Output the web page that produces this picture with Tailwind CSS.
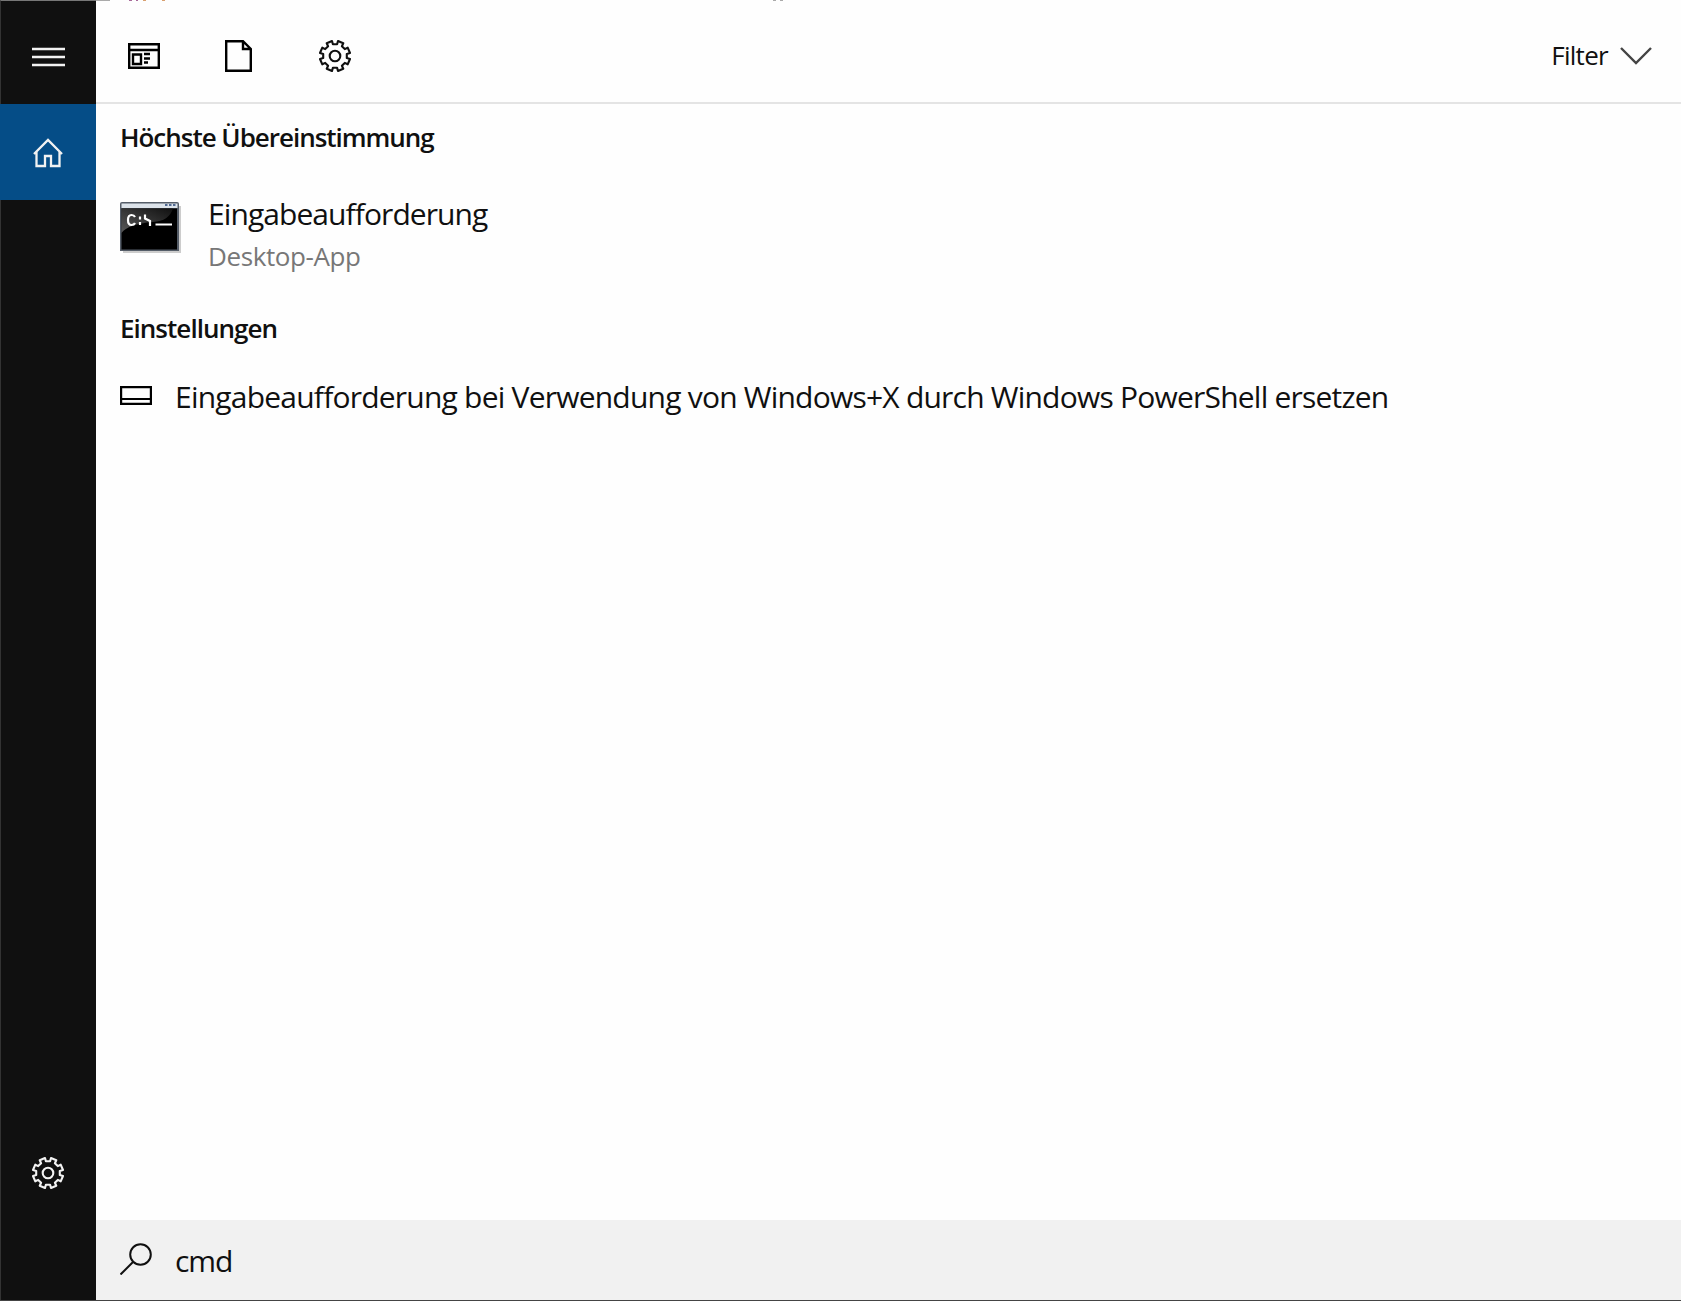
<!DOCTYPE html>
<html lang="de">
<head>
    <meta charset="UTF-8">
    <meta name="viewport" content="width=device-width, initial-scale=1.0">
    <title>Suche - cmd</title>
    <script src="https://cdn.jsdelivr.net/npm/@tailwindcss/browser@4"></script>
</head>
<body class="bg-[#fefefe] font-['Open_Sans','Noto_Sans',sans-serif] text-[#101010] overflow-hidden">
    <svg class="hidden">
        <symbol id="gear" viewBox="-17 -17 34 34">
            <path d="M-2.1-11.8L-3-15L-8.3-12.7L-6.9-9.8L-9.8-6.9L-12.7-8.3L-15-3L-11.8-2.1V2.1L-15 3L-12.7 8.3L-9.8 6.9L-6.9 9.8L-8.3 12.7L-3 15L-2.1 11.8H2.1L3 15L8.3 12.7L6.9 9.8L9.8 6.9L12.7 8.3L15 3L11.8 2.1V-2.1L15-3L12.7-8.3L9.8-6.9L6.9-9.8L8.3-12.7L3-15L2.1-11.8Z" fill="none" stroke="currentColor" stroke-width="2.1" stroke-linejoin="round"/>
            <circle r="5.3" fill="none" stroke="currentColor" stroke-width="2.1"/>
        </symbol>
    </svg>

    <div class="relative flex h-[1301px] w-[1681px] border-b border-[#444]">
        <!-- Sidebar -->
        <nav class="flex w-24 shrink-0 flex-col border-t border-l border-t-[#777] border-l-[#333] bg-[#101010] text-[#f2f2f2]">
            <button class="flex h-[103px] items-center justify-center pt-[9px] pr-px">
                <svg class="h-5 w-[33px]" viewBox="0 0 33 20" stroke="currentColor" stroke-width="2.4"><path d="M0 2h33M0 10h33M0 18h33"/></svg>
            </button>
            <button class="-ml-px flex h-24 items-center justify-center bg-[#054d87] pt-0.5">
                <svg class="h-8 w-8" viewBox="0 0 32 32" fill="none" stroke="currentColor" stroke-width="2.3"><path d="M2 17L16 3L30 17M4.500 15V29H13V19H19V29H27.500V15"/></svg>
            </button>
            <button class="mt-auto mb-[110px] flex justify-center pr-px">
                <svg class="h-[34px] w-[34px]"><use href="#gear"/></svg>
            </button>
        </nav>

        <main class="flex flex-1 flex-col">
            <header class="flex h-[104px] items-center border-b-2 border-[#e4e4e4] pt-2.5 pr-[29px] pl-8">
                <svg class="h-[26px] w-8" viewBox="0 0 32 26" fill="none" stroke="#000" stroke-width="2.4"><path d="M1.200 1.200H30.800V24.800H1.200ZM1 7H31M5 11.500H13V21H5ZM16 11h6M16 15.500h6M16 19.500h4"/></svg>
                <svg class="ml-[65px] h-8 w-[27px]" viewBox="0 0 27 32" fill="none" stroke="#000" stroke-width="2.4"><path d="M1.200 1.200H18L25.800 9V30.800H1.200ZM18 1V9H26"/></svg>
                <svg class="ml-[66px] h-[34px] w-[34px]"><use href="#gear"/></svg>
                <span class="-mt-0.5 ml-auto text-[26px] tracking-[-0.7px]">Filter</span>
                <svg class="ml-3 h-[18px] w-8" viewBox="0 0 32 18" fill="none" stroke="#444" stroke-width="2.4"><path d="M1 1L16 16L31 1"/></svg>
            </header>

            <section class="flex-1 px-6">
                <h2 class="mt-[15px] text-[26px] leading-9 font-semibold tracking-[-1.02px]"><span>Höchste Übereinstimmung</span></h2>
                <div class="mt-[42px] flex">
                    <svg class="mt-[5px] h-[54px] w-[64px]" viewBox="0 0 64 54">
                        <defs>
                            <linearGradient id="gloss" x1="0" y1="1" x2="1" y2="0"><stop offset="0" stop-color="#777"/><stop offset="1" stop-color="#151515"/></linearGradient>
                        </defs>
                        <path d="M3 4H61V51H3Z" fill="#ccc"/>
                        <path d="M0 2Q0 0 2 0H57Q59 0 59 2V49H0Z" fill="#555d68"/>
                        <path d="M1.500 1.500H57.500V6H1.500Z" fill="#dce3ea"/>
                        <path d="M45 3h2.500M49 3h2.500M53 3h2.500" stroke="#526a92" stroke-width="2"/>
                        <path d="M1.500 6.500H57V47.500H1.500Z" fill="#000"/>
                        <path d="M1.500 6.500H53Q49 19 33 20Q8 22 1.500 31Z" fill="url(#gloss)" opacity=".75"/>
                        <path d="M15 15Q14 13 11.500 13Q8 13 8 18Q8 23 11.500 23Q14 23 15 21M20 14.500v3M20 20v3M25 12.500v4L30 19v5M35.500 22.500H52" fill="none" stroke="#fff" stroke-width="2.200"/>
                    </svg>
                    <div class="ml-6">
                        <div class="-mt-[3px] text-[30px] leading-10 tracking-[-0.92px]"><span>Eingabeaufforderung</span></div>
                        <div class="mt-1 text-[26px] leading-9 tracking-[-0.4px] text-[#777]"><span>Desktop-App</span></div>
                    </div>
                </div>
                <h2 class="mt-9 text-[26px] leading-9 font-semibold tracking-[-0.97px]"><span>Einstellungen</span></h2>
                <div class="mt-[31px] flex items-center">
                    <svg class="-mt-1 h-[19px] w-8" viewBox="0 0 32 19" fill="none" stroke="#000" stroke-width="2.2"><path d="M1.100 1.100H30.900V17.900H1.100ZM1 13H31"/></svg>
                    <span class="ml-[23px] text-[30px] leading-10 tracking-[-0.78px] whitespace-nowrap">Eingabeaufforderung bei Verwendung von Windows+X durch Windows PowerShell ersetzen</span>
                </div>
            </section>

            <!-- Search box -->
            <footer class="flex h-20 items-center bg-[#f1f1f1] pt-0.5 pl-6">
                <svg class="-mt-1 h-8 w-8" viewBox="0 0 32 32" fill="none" stroke="currentColor" stroke-width="2"><circle cx="20.500" cy="11.500" r="10.300"/><path d="M13 19L0.500 31.500"/></svg>
                <span class="ml-[23px] text-[30px] leading-10 tracking-[-1.1px]">cmd</span>
            </footer>
        </main>

        <!-- Slivers of the window behind -->
        <svg class="absolute top-0 left-0 h-px w-[820px]" viewBox="0 0 820 1">
            <path d="M96 0h14v1h-14zM773 0h3v1h-3zM780 0h3v1h-3z" fill="#aaa"/>
            <path d="M129 0h3v1h-3zM136 0h2v1h-2z" fill="#a86a9a"/>
            <path d="M143 0h3v1h-3zM162 0h3v1h-3z" fill="#d9a070"/>
        </svg>
    </div>
</body>
</html>
